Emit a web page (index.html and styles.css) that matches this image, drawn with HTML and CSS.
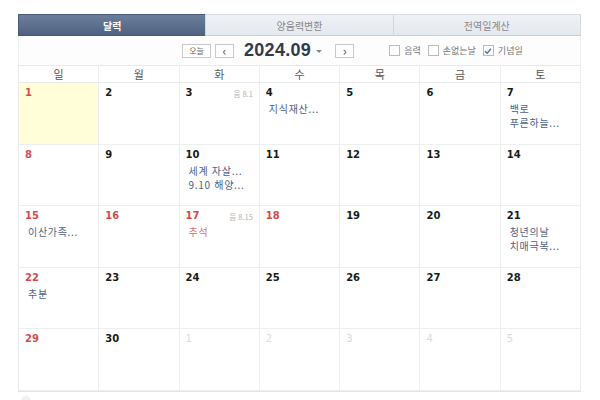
FILE: index.html
```html
<!DOCTYPE html>
<html lang="ko">
<head>
    <meta charset="UTF-8">
    <title>달력</title>
    <link rel="stylesheet" href="styles.css">
</head>
<body>

    <div class="calendar">
        <div class="tabs">
            <div class="tab active">달력</div>
            <div class="tab">양음력변환</div>
            <div class="tab">전역일계산</div>
        </div>

        <div class="controls">
            <div class="nav">
                <button class="small-btn today">오늘</button>
                <button class="small-btn arrow">&lsaquo;</button>
                <span class="month">2024.09</span>
                <span class="caret"></span>
                <button class="small-btn arrow next">&rsaquo;</button>
            </div>
            <div class="options">
                <label class="opt"><span class="box"></span>음력</label>
                <label class="opt"><span class="box"></span>손없는날</label>
                <label class="opt"><span class="box checked">
                    <svg width="8" height="8" viewBox="0 0 8 8"><path d="M1 4.2 L3.2 6.2 L7 1.6" fill="none" stroke="#3b6fb6" stroke-width="1.4"/></svg>
                </span>기념일</label>
            </div>
        </div>

        <div class="grid">
            <div class="head">일</div>
            <div class="head">월</div>
            <div class="head">화</div>
            <div class="head">수</div>
            <div class="head">목</div>
            <div class="head">금</div>
            <div class="head">토</div>

            <!-- week 1 -->
            <div class="cell today-cell"><span class="num sun">1</span></div>
            <div class="cell"><span class="num">2</span></div>
            <div class="cell"><span class="num">3</span><span class="lunar">음 8.1</span></div>
            <div class="cell"><span class="num">4</span><p class="event">지식재산...</p></div>
            <div class="cell"><span class="num">5</span></div>
            <div class="cell"><span class="num">6</span></div>
            <div class="cell"><span class="num">7</span><p class="event">백로</p><p class="event">푸른하늘...</p></div>

            <!-- week 2 -->
            <div class="cell"><span class="num sun">8</span></div>
            <div class="cell"><span class="num">9</span></div>
            <div class="cell"><span class="num">10</span><p class="event">세계 자살...</p><p class="event">9.10 해양...</p></div>
            <div class="cell"><span class="num">11</span></div>
            <div class="cell"><span class="num">12</span></div>
            <div class="cell"><span class="num">13</span></div>
            <div class="cell"><span class="num">14</span></div>

            <!-- week 3 -->
            <div class="cell"><span class="num sun">15</span><p class="event">이산가족...</p></div>
            <div class="cell"><span class="num sun">16</span></div>
            <div class="cell"><span class="num sun">17</span><span class="lunar">음 8.15</span><p class="event holiday">추석</p></div>
            <div class="cell"><span class="num sun">18</span></div>
            <div class="cell"><span class="num">19</span></div>
            <div class="cell"><span class="num">20</span></div>
            <div class="cell"><span class="num">21</span><p class="event">청년의날</p><p class="event">치매극복...</p></div>

            <!-- week 4 -->
            <div class="cell"><span class="num sun">22</span><p class="event">추분</p></div>
            <div class="cell"><span class="num">23</span></div>
            <div class="cell"><span class="num">24</span></div>
            <div class="cell"><span class="num">25</span></div>
            <div class="cell"><span class="num">26</span></div>
            <div class="cell"><span class="num">27</span></div>
            <div class="cell"><span class="num">28</span></div>

            <!-- week 5 -->
            <div class="cell"><span class="num sun">29</span></div>
            <div class="cell"><span class="num">30</span></div>
            <div class="cell"><span class="num other">1</span></div>
            <div class="cell"><span class="num other">2</span></div>
            <div class="cell"><span class="num other">3</span></div>
            <div class="cell"><span class="num other">4</span></div>
            <div class="cell"><span class="num other">5</span></div>
        </div>

        <div class="dot"></div>
    </div>

</body>
</html>
```

FILE: styles.css
```css
body {
    margin: 0;
    background-color: #fff;
    font-family: "Noto Sans CJK KR", "Noto Sans", sans-serif;
    color: #222;
}

.calendar {
    width: 563px;
    margin: 14px 0 0 18px;
}

.tabs {
    display: flex;
    height: 22px;
}

.tab {
    flex: 1;
    display: flex;
    align-items: center;
    justify-content: center;
    font-size: 10px;
    color: #888;
    background: linear-gradient(#eef2f6, #e4e9ef);
    border-top: 1px solid #d9dee4;
    border-bottom: 1px solid #c9ced5;
    border-left: 1px solid #d3d8de;
    box-sizing: border-box;
}

.tab:last-child {
    border-right: 1px solid #d3d8de;
}

.tab.active {
    background: linear-gradient(#6b7f9c, #4f6280);
    color: #fff;
    font-weight: bold;
    border-color: #4a5b76;
}

.controls {
    height: 29px;
    display: flex;
    align-items: center;
    border-left: 1px solid #eceef0;
    border-right: 1px solid #eceef0;
    background-color: #fdfdfd;
}

.nav {
    display: flex;
    align-items: center;
    margin-left: 163px;
}

.small-btn {
    height: 12px;
    width: 27px;
    padding: 0;
    border: 1px solid #c9c9c9;
    background: #fff;
    font-family: inherit;
    font-size: 8px;
    color: #666;
    line-height: 11px;
    box-sizing: content-box;
}

.small-btn.arrow {
    width: 17px;
    margin-left: 4px;
    font-size: 13px;
    line-height: 9px;
    color: #555;
}

.small-btn.next {
    margin-left: 13px;
}

.month {
    margin-left: 10px;
    font-family: "Liberation Sans", Arial, sans-serif;
    font-weight: bold;
    font-size: 18px;
    color: #333a4c;
    letter-spacing: 0.3px;
}

.caret {
    width: 0;
    height: 0;
    margin-left: 5px;
    margin-top: 1px;
    border-left: 3px solid transparent;
    border-right: 3px solid transparent;
    border-top: 3px solid #888;
}

.options {
    display: flex;
    align-items: center;
    margin-left: 35px;
    gap: 7px;
}

.opt {
    display: flex;
    align-items: center;
    font-size: 9px;
    color: #777;
}

.box {
    width: 9px;
    height: 9px;
    border: 1px solid #bbb;
    background: #fff;
    margin-right: 4px;
    display: flex;
    align-items: center;
    justify-content: center;
}

.grid {
    display: grid;
    grid-template-columns: repeat(7, 1fr);
    grid-template-rows: 18px repeat(5, 61.6px);
    border-left: 1px solid #e8e9eb;
    border-bottom: 1px solid #e3e4e6;
}

.head {
    display: flex;
    align-items: center;
    justify-content: center;
    font-size: 11px;
    color: #555;
    border-top: 1px solid #e8e9eb;
    border-right: 1px solid #eceef0;
    border-bottom: 1px solid #e8e9eb;
}

.cell {
    position: relative;
    border-right: 1px solid #eceef0;
    border-bottom: 1px solid #eceef0;
    padding: 3px 6px;
}

.today-cell {
    background-color: #fffed8;
}

.num {
    display: block;
    font-family: "DejaVu Sans", sans-serif;
    font-weight: bold;
    font-size: 10px;
    line-height: 14px;
    color: #1a1a1a;
}

.num.sun {
    color: #d24b4f;
}

.num.other {
    color: #dadada;
    font-weight: normal;
}

.lunar {
    position: absolute;
    top: 5px;
    right: 6px;
    font-size: 7.5px;
    color: #b4b4b4;
}

.event {
    margin: 0 0 0 3px;
    font-size: 10px;
    line-height: 14px;
    color: #4c5f86;
    letter-spacing: 0.7px;
    white-space: nowrap;
}

.cell .num + .event,
.cell .lunar + .event {
    margin-top: 2px;
}

.event.holiday {
    color: #d0706c;
}

.dot {
    width: 10px;
    height: 10px;
    margin: 4px 0 0 3px;
    border-radius: 50%;
    background-color: #efefef;
}
```
